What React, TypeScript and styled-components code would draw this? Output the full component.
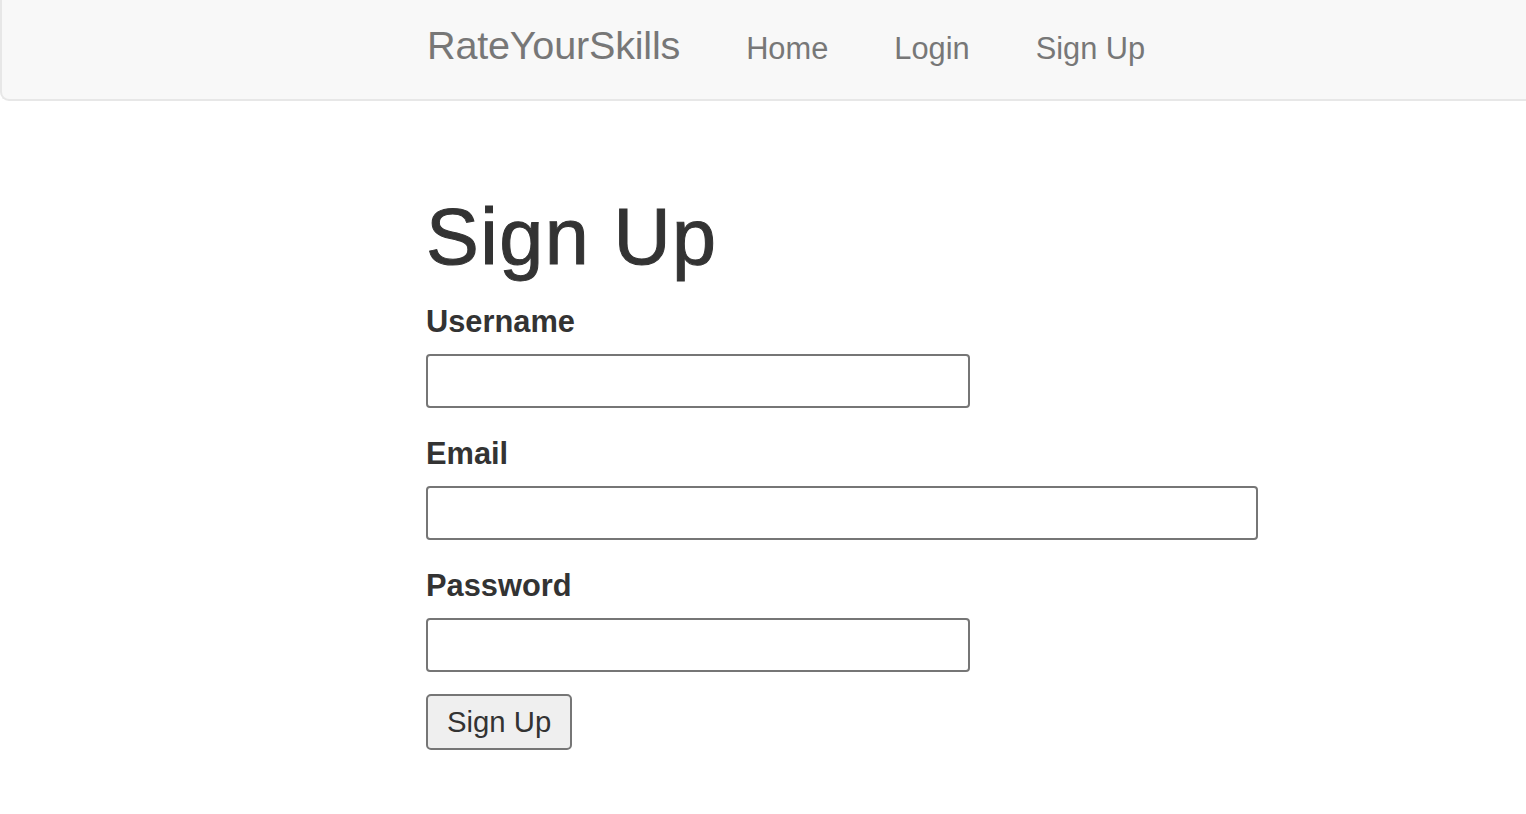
import React from 'react'
import styled, { createGlobalStyle } from 'styled-components'

const GlobalStyle = createGlobalStyle`
  html, body {
    margin: 0;
    padding: 0;
    background: #ffffff;
  }
  body {
    font-family: 'Liberation Sans', Arial, Helvetica, sans-serif;
    color: #333333;
  }
  * {
    box-sizing: border-box;
  }
`

const NAV_LINKS = ['Home', 'Login', 'Sign Up']

const FIELDS = [
  { id: 'username', label: 'Username', type: 'text', wide: false },
  { id: 'email', label: 'Email', type: 'email', wide: true },
  { id: 'password', label: 'Password', type: 'password', wide: false },
]

export default function App() {
  return (
    <>
      <GlobalStyle />
      <Navbar>
        <NavInner>
          <Brand href="#">RateYourSkills</Brand>
          <NavList>
            {NAV_LINKS.map((link) => (
              <NavItem key={link}>
                <NavLink href="#">{link}</NavLink>
              </NavItem>
            ))}
          </NavList>
        </NavInner>
      </Navbar>
      <Container>
        <Title>Sign Up</Title>
        <Form onSubmit={(e) => e.preventDefault()}>
          {FIELDS.map((field) => (
            <Field key={field.id}>
              <Label htmlFor={field.id}>{field.label}</Label>
              <Input id={field.id} type={field.type} $wide={field.wide} />
            </Field>
          ))}
          <SubmitButton type="submit">Sign Up</SubmitButton>
        </Form>
      </Container>
    </>
  )
}

const Navbar = styled.nav`
  height: 101px;
  background: #f8f8f8;
  border-left: 2px solid #e7e7e7;
  border-bottom: 2px solid #e7e7e7;
  border-bottom-left-radius: 9px;
`

const NavInner = styled.div`
  display: flex;
  align-items: baseline;
  width: 674px;
  margin: 0 auto;
  padding-top: 23px;
  white-space: nowrap;
`

const Brand = styled.a`
  font-size: 39.6px;
  line-height: 44px;
  color: #777777;
  text-decoration: none;
  letter-spacing: -0.2px;
`

const NavList = styled.ul`
  display: flex;
  align-items: baseline;
  flex-shrink: 0;
  list-style: none;
  margin: 0 0 0 33px;
  padding: 0;
`

const NavItem = styled.li`
  padding: 0 33px;
  white-space: nowrap;
`

const NavLink = styled.a`
  font-size: 30.8px;
  line-height: 44px;
  color: #777777;
  text-decoration: none;
`

const Container = styled.main`
  width: 674px;
  margin: 0 auto;
`

const Title = styled.h1`
  margin: 92px 0 20px;
  font-size: 79.2px;
  line-height: 87px;
  font-weight: 400;
  color: #333333;
  letter-spacing: 1.4px;
  -webkit-text-stroke: 1px #333333;
`

const Form = styled.form`
  display: flex;
  flex-direction: column;
  align-items: flex-start;
  gap: 24px;
`

const Field = styled.div`
  display: flex;
  flex-direction: column;
  align-items: flex-start;
`

const Label = styled.label`
  margin-bottom: 10px;
  font-size: 30.8px;
  line-height: 44px;
  font-weight: 700;
  color: #333333;
`

const Input = styled.input<{ $wide: boolean }>`
  width: ${({ $wide }) => ($wide ? '832px' : '544px')};
  height: 54px;
  padding: 2px 5px;
  border: 2px solid #767676;
  border-radius: 4px;
  background: #ffffff;
  font-family: inherit;
  font-size: 29px;
  color: #333333;
  outline: none;
`

const SubmitButton = styled.button`
  margin-top: -2px;
  height: 56px;
  padding: 0 19px;
  border: 2px solid #767676;
  border-radius: 5px;
  background: #efefef;
  font-family: inherit;
  font-size: 29.3px;
  color: #333333;
  cursor: pointer;
`
